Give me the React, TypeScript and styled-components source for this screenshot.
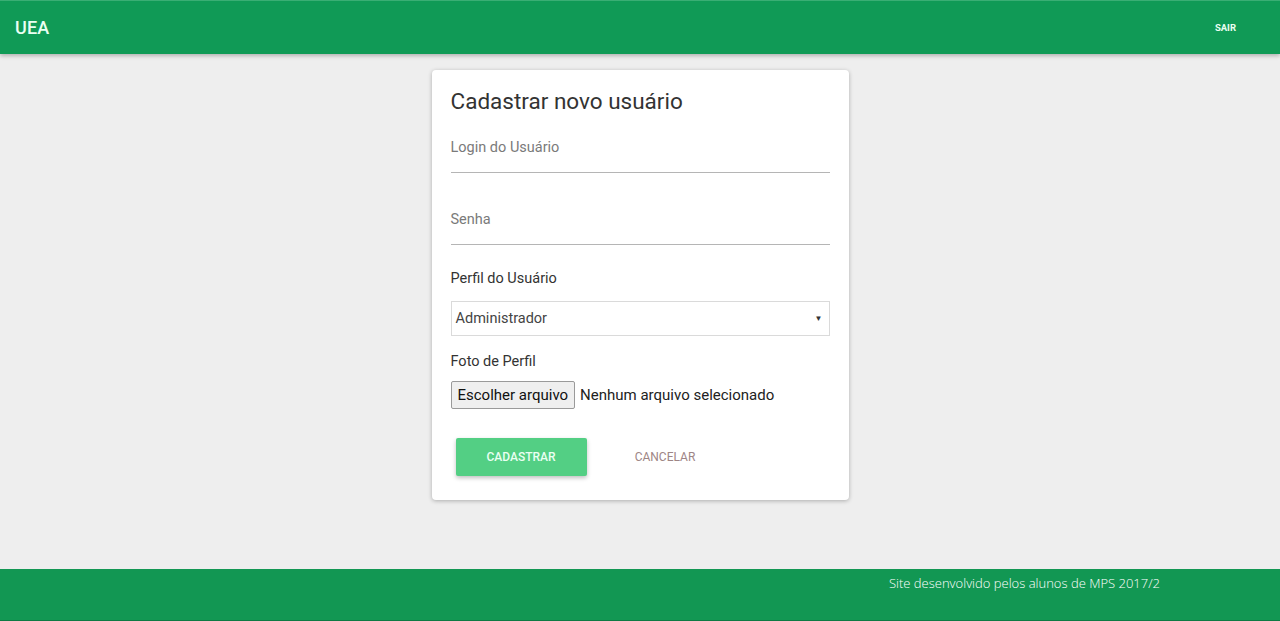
import React from "react";
import styled, { createGlobalStyle } from "styled-components";

const Global = createGlobalStyle`
  html, body { margin: 0; padding: 0; background: #eeeeee; }
  body { font-family: Roboto, "Liberation Sans", sans-serif; }
  * { box-sizing: border-box; }
`;

const Page = styled.div`
  display: flex;
  flex-direction: column;
  min-height: 621px;
  background: #eeeeee;
`;

const Header = styled.header`
  height: 54px;
  background: #109a56;
  display: flex;
  align-items: center;
  justify-content: space-between;
  padding: 0 44px 0 15px;
  box-shadow: 0 2px 4px rgba(0, 0, 0, 0.25);
  border-top: 1px solid #3aae74;
`;

const Brand = styled.div`
  color: #eafff2;
  font-size: 18px;
  font-weight: 500;
  letter-spacing: 0.2px;
`;

const Logout = styled.div`
  color: #eafff2;
  font-size: 9.5px;
  font-weight: 700;
`;

const Main = styled.main`
  flex: 1;
  display: flex;
  justify-content: center;
  align-items: flex-start;
  padding-top: 16px;
`;

const Card = styled.section`
  width: 417px;
  height: 430px;
  background: #ffffff;
  border-radius: 4px;
  box-shadow: 0 1px 4px rgba(0, 0, 0, 0.28);
  padding: 18px 19px 0 19px;
  display: flex;
  flex-direction: column;
`;

const Title = styled.h1`
  margin: 0;
  font-size: 22.5px;
  font-weight: 400;
  color: #333333;
  line-height: 26px;
`;

const TextField = styled.div<{ $top: number }>`
  margin-top: ${(p) => p.$top}px;
  border-bottom: 1px solid #b5b5b5;
  height: 35px;
  display: flex;
  align-items: flex-start;
  font-size: 14.5px;
  color: #7a7a7a;
  line-height: 20px;
`;

const Label = styled.div<{ $top: number }>`
  margin-top: ${(p) => p.$top}px;
  font-size: 14.5px;
  color: #333333;
  line-height: 20px;
`;

const Select = styled.div`
  margin-top: 12px;
  height: 35px;
  border: 1px solid #dadada;
  display: flex;
  align-items: center;
  justify-content: space-between;
  padding: 0 6px 0 4px;
  font-size: 14.5px;
  color: #444444;
`;

const Arrow = styled.span`
  font-size: 8px;
  color: #333;
`;

const FileRow = styled.div`
  margin-top: 9px;
  display: flex;
  align-items: center;
  gap: 5px;
  font-size: 15px;
  color: #222;
`;

const FileButton = styled.div`
  height: 28px;
  padding: 0 6px;
  display: flex;
  align-items: center;
  background: #efefef;
  border: 1px solid #9a9a9a;
  border-radius: 2px;
  color: #111;
`;

const Actions = styled.div`
  margin-top: 29px;
  display: flex;
  align-items: center;
  padding-left: 5px;
`;

const Primary = styled.div`
  width: 131px;
  height: 38px;
  background: #53cf84;
  color: #eafff2;
  font-size: 12px;
  font-weight: 500;
  display: flex;
  align-items: center;
  justify-content: center;
  border-radius: 2px;
  box-shadow: 0 2px 4px rgba(0, 0, 0, 0.25);
`;

const Flat = styled.div`
  width: 157px;
  text-align: center;
  color: #9e8585;
  font-size: 12px;
`;

const Footer = styled.footer`
  height: 52px;
  background: #129753;
  border-bottom: 1px solid #0d7a44;
  display: flex;
  justify-content: flex-end;
  padding: 4px 120px 0 0;
`;

const FooterText = styled.div`
  color: #ffffff;
  font-family: "Open Sans", "Noto Sans", sans-serif;
  font-weight: 300;
  font-size: 13px;
  line-height: 20px;
`;

export default function App() {
  return (
    <>
      <Global />
      <Page>
        <Header>
          <Brand>UEA</Brand>
          <Logout>SAIR</Logout>
        </Header>
        <Main>
          <Card>
            <Title>Cadastrar novo usuário</Title>
            <TextField $top={24}>Login do Usuário</TextField>
            <TextField $top={37}>Senha</TextField>
            <Label $top={24}>Perfil do Usuário</Label>
            <Select>
              <span>Administrador</span>
              <Arrow>▼</Arrow>
            </Select>
            <Label $top={16}>Foto de Perfil</Label>
            <FileRow>
              <FileButton>Escolher arquivo</FileButton>
              <span>Nenhum arquivo selecionado</span>
            </FileRow>
            <Actions>
              <Primary>CADASTRAR</Primary>
              <Flat>CANCELAR</Flat>
            </Actions>
          </Card>
        </Main>
        <Footer>
          <FooterText>Site desenvolvido pelos alunos de MPS 2017/2</FooterText>
        </Footer>
      </Page>
    </>
  );
}
